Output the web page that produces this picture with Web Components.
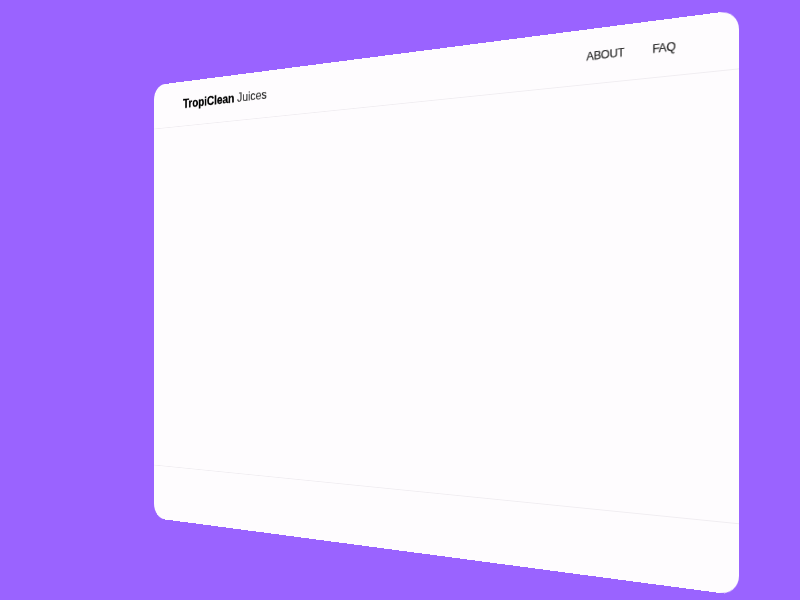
<!DOCTYPE html>
<html>
<head>
<meta charset="utf-8">
<style>
  html, body { margin: 0; height: 100%; overflow: hidden; background: #9a63ff; font-family: "Liberation Sans", Arial, sans-serif; }
  juice-header b { color: #000; -webkit-text-stroke: 0.4px #000; }
</style>
</head>
<body>
<juice-window>
  <juice-header slot="header">
    <span slot="logo"><b>TropiClean</b> Juices</span>
    <a slot="nav">ABOUT</a>
    <a slot="nav">FAQ</a>
  </juice-header>
</juice-window>
<script>
class JuiceWindow extends HTMLElement {
  connectedCallback() {
    this.attachShadow({ mode: 'open' });
    this.shadowRoot.innerHTML = `
      <style>
        :host {
          display: grid;
          grid-template-rows: 60px 1fr 73px;
          width: 800px;
          height: 600px;
          background: #fefcfe;
          border-radius: 20px;
          overflow: hidden;
          transform-origin: 0 0;
          transform: matrix3d(0.48979, -0.0977, 0, -0.00032675, 0, 0.721, 0, 0, 0, 0, 1, 0, 154, 85.4, 0, 1);
        }
        main { border-top: 1px solid #f0edf1; border-bottom: 1px solid #f0edf1; }
      </style>
      <slot name="header"></slot>
      <main></main>
      <footer></footer>
    `;
  }
}

class JuiceHeader extends HTMLElement {
  connectedCallback() {
    this.attachShadow({ mode: 'open' });
    this.shadowRoot.innerHTML = `
      <style>
        :host {
          display: flex;
          justify-content: space-between;
          align-items: center;
          padding: 0 66px 0 53px;
        }
        .logo { font-size: 17.2px; color: #333; }
        ::slotted(span) { -webkit-text-stroke: 0.15px currentColor; }
        nav {
          display: flex;
          gap: 31px;
          padding-bottom: 2px;
          font-size: 13px;
          letter-spacing: -0.3px;
          color: #2b2b2b;
          -webkit-text-stroke: 0.25px currentColor;
        }
      </style>
      <div class="logo"><slot name="logo"></slot></div>
      <nav><slot name="nav"></slot></nav>
    `;
  }
}

customElements.define('juice-window', JuiceWindow);
customElements.define('juice-header', JuiceHeader);
</script>
</body>
</html>
